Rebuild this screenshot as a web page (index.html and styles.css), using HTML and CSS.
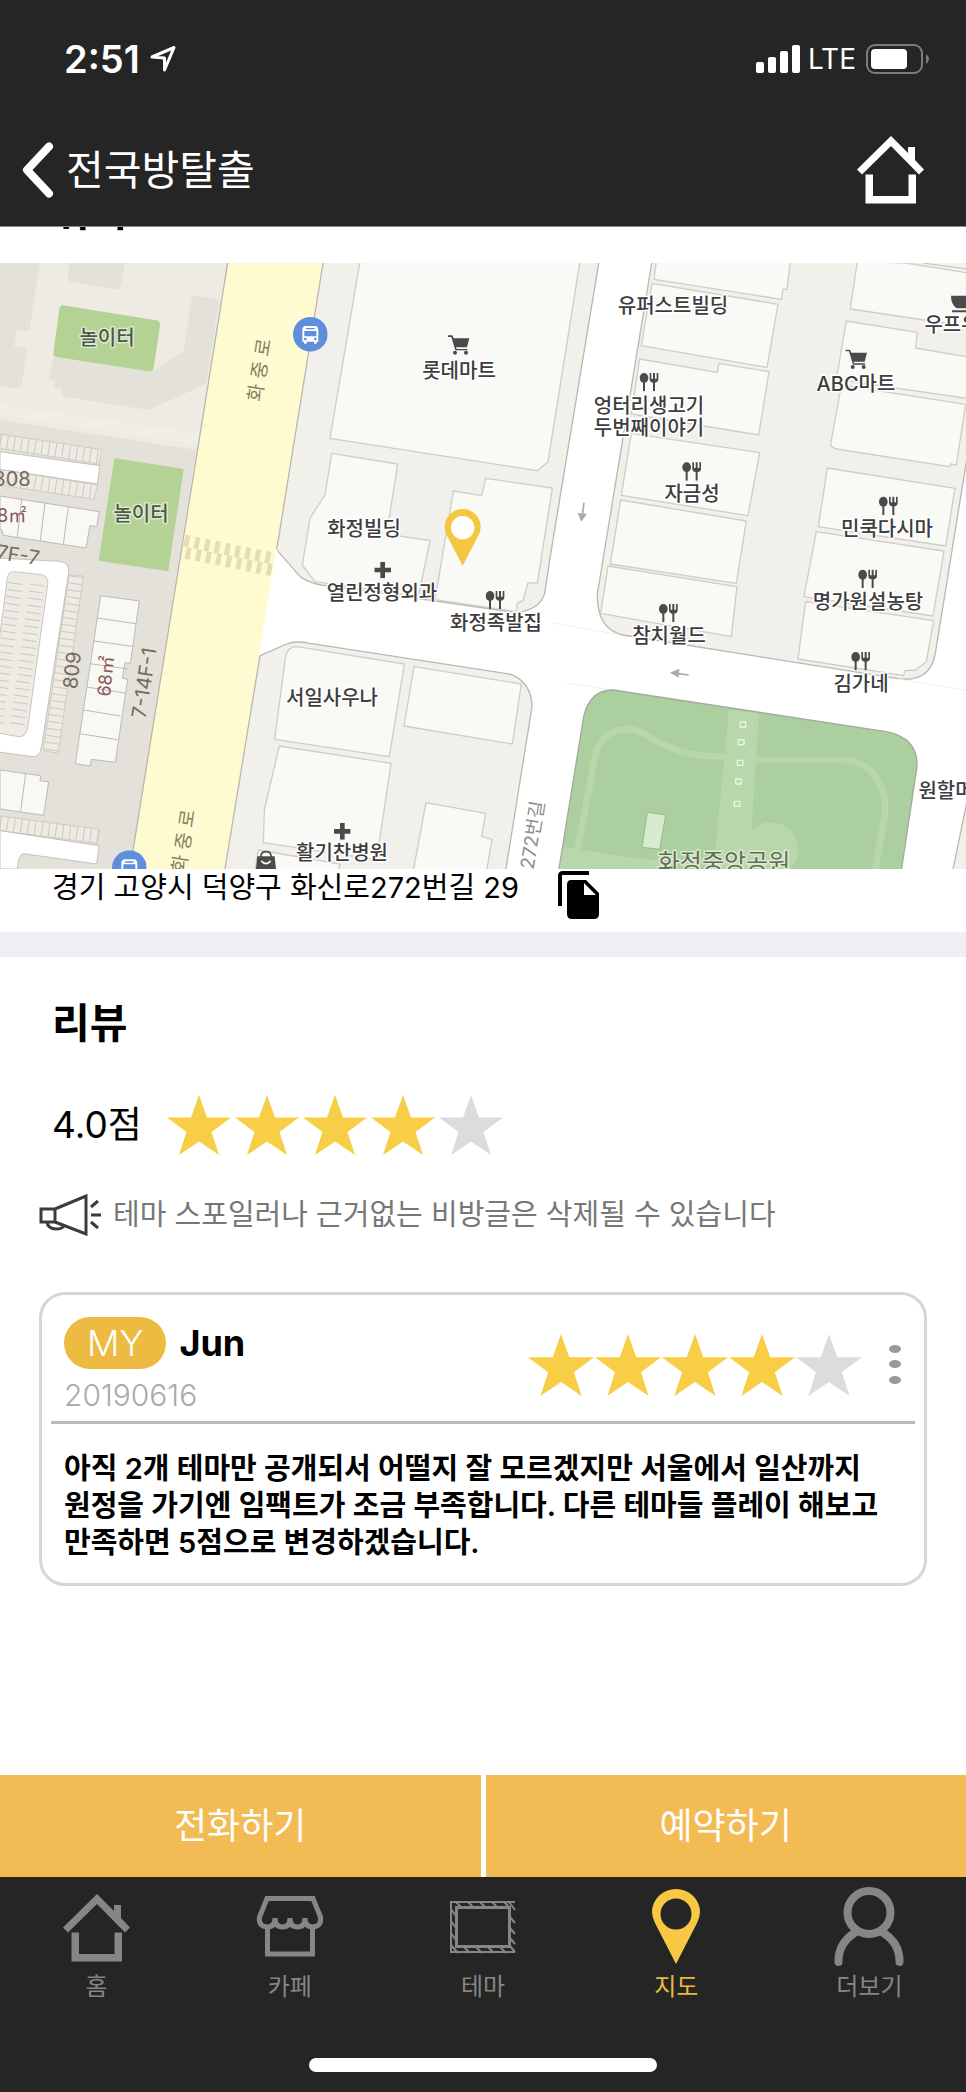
FILE: index.html
```html
<!DOCTYPE html>
<html lang="ko">
<head>
  <meta charset="UTF-8">
  <meta name="viewport" content="width=device-width, initial-scale=1">
  <title>전국방탈출</title>
  <link rel="stylesheet" href="styles.css">
</head>
<body>
  <svg class="simbolos" aria-hidden="true">
    <symbol id="star" viewBox="0 0 64 60"><path d="M32 0L40 22.500H64L44.500 37L52 60L32 46.500L12 60L19.500 37L0 22.500H24Z"/></symbol>
    <symbol id="home" viewBox="0 0 68 68">
      <path d="M34 0L51 17V11H58V24L67 33.500L62 38.500L34 10L5 38.500L0 33.500Z"/>
      <path d="M8.500 38.500H16V60H51.500V38.500H59V67.500H8.500Z"/>
    </symbol>
    <symbol id="food" viewBox="0 0 60 56">
      <ellipse cx="14" cy="16" rx="13" ry="15"/>
      <path d="M11 28H17V56H11ZM31 1H36V18H41V1H47V18H52V1H57V20Q57 29 47 30V56H41V30Q31 29 31 20Z"/>
    </symbol>
    <symbol id="cart" viewBox="0 0 66 60">
      <path d="M0 1H14L18 10H65L58 37H25L27 42H59V46H23L11 6H0Z"/>
      <circle cx="22" cy="53" r="6"/><circle cx="55" cy="53" r="6"/>
    </symbol>
    <symbol id="plus" viewBox="0 0 50 50"><path d="M18 0H32V18H50V32H32V50H18V32H0V18H18Z"/></symbol>
    <symbol id="bus" viewBox="0 0 104 104">
      <circle cx="52" cy="52" r="52" fill="#5f8fdc"/>
      <path fill="#fff" d="M38 27H66Q75 28 76 38V74H71V80H63V74H41V80H33V74H28V38Q29 28 38 27Z"/>
      <path fill="#5f8fdc" d="M39 33H65V37H39ZM34 42H70V58H34Z"/>
      <circle cx="37" cy="66" r="4" fill="#5f8fdc"/><circle cx="67" cy="66" r="4" fill="#5f8fdc"/>
    </symbol>
  </svg>

  <div class="app">
    <div class="status">
      <span class="clock">2:51</span>
      <svg class="arrow" viewBox="0 0 26 28" aria-hidden="true"><path d="M2 12L24 2.500L14.500 25V13Z"/></svg>
      <svg class="signal" viewBox="0 0 45 28" aria-hidden="true">
        <rect x="0" y="17" width="8" height="11" rx="2"/><rect x="12" y="12" width="8" height="16" rx="2"/>
        <rect x="24" y="6" width="8" height="22" rx="2"/><rect x="36" y="0" width="8" height="28" rx="2"/>
      </svg>
      <span class="network">LTE</span>
      <svg class="battery" viewBox="0 0 64 30" aria-hidden="true">
        <rect x="1" y="1" width="55" height="28" rx="8" fill="none" stroke="#7c7c7c" stroke-width="2"/>
        <rect x="5" y="5" width="36" height="20" rx="4" fill="#fff"/>
        <path d="M60 10Q66 15 60 20Z" fill="#7c7c7c"/>
      </svg>
    </div>

    <header class="header">
      <button class="back" type="button">
        <svg viewBox="0 0 32 56" aria-hidden="true"><path d="M27 4.500L5 28L27 51.500"/></svg>
        <span>전국방탈출</span>
      </button>
      <a class="go-home" href="#" aria-label="홈"><svg viewBox="0 0 68 68"><use href="#home"/></svg></a>
    </header>

    <main class="content">
      <section class="location">
        <h2 class="location-title">위치</h2>

        <svg class="map" viewBox="0 0 966 606" role="img" aria-label="지도">
          <rect width="966" height="606" fill="#fff"/>
          <g transform="scale(.33333)" stroke-linejoin="round">
            <!-- 아파트 단지 -->
            <path fill="#edebe4" d="M0 0H683L390 1818H0Z"/>
            <g fill="#e3e1da">
              <path d="M0 0H120L88 203H50L42 250L82 255L65 365Q55 380 30 375L0 368Z"/>
              <path d="M207 0H375L364 65Q360 80 340 78L218 58Q201 55 203 40Z"/>
              <path d="M160 281L145 349L163 353L160 371L187 378L185 399L445 441L618 363L657 115L640 106L590 99Q576 98 574 112L550 266L455 326Z"/>
              <path d="M0 471L588 560L390 1818H0Z"/>
            </g>
            <path fill="#efefe8" d="M0 425L604 512L596 545L0 455Z"/>
            <path fill="#b4d294" d="M188 127L468 172Q482 175 480 188L461 314Q458 327 445 325L168 282Q159 280 160 272L178 138Q180 127 188 127ZM343 585L551 618L505 925L296 893Z"/>
            <g fill="#edebe4" stroke="#cfccc5" stroke-width="3">
              <path d="M0 513L306 560L297 603L0 556ZM0 619L292 666L282 709L0 666Z"/>
              <path d="M207 936L250 939L175 1471L130 1463ZM0 1659L298 1699L292 1741L0 1703Z"/>
            </g>
            <g fill="#fff" stroke="#c4c1bb" stroke-width="3">
              <path d="M0 566L300 608L292 663L0 619ZM0 1703L297 1748L290 1803L70 1772Q55 1775 52 1818H0Z"/>
              <path d="M-5 885L180 895Q210 900 206 930L124 1455Q118 1487 90 1480L-5 1467Z"/>
            </g>
            <path fill="#edebe4" stroke="#c9c6c0" stroke-width="3" d="M40 926L125 935Q147 940 143 965L83 1395Q77 1427 50 1420L-5 1410V1150L22 945Q25 926 40 926Z"/>
            <g fill="none" stroke="#cbc8c1" stroke-dasharray="3 18">
              <path d="M0 535L302 582M0 643L287 688M228 940L153 1466M0 1681L295 1721" stroke-width="42"/>
              <path d="M112 965L50 1400M47 960L-15 1395" stroke-width="44"/>
            </g>
            <g fill="#f8f8f5" stroke="#bdbab5" stroke-width="3">
              <path d="M0 699L298 746L290 791L270 788L258 855L10 817L5 800H0ZM65 709L52 822M135 720L121 833M205 731L190 844"/>
              <path d="M302 998L418 1014L391 1201L375 1199L367 1246L383 1249L346 1498L274 1489L271 1509L226 1502ZM291 1065L408 1082M281 1134L398 1150M270 1202L385 1218M260 1272L375 1290M250 1341L362 1359M239 1412L352 1430"/>
              <path d="M0 1521L122 1538L120 1553L146 1557L131 1657L0 1638ZM77 1531L62 1645"/>
            </g>

            <!-- 화중로 -->
            <path fill="#fffbd1" d="M683 0H970L830 856L820 931L780 1176L675 1818H390Z"/>
            <path fill="none" stroke="#bab7aa" stroke-width="4" d="M683 0L390 1818"/>
            <g fill="none" stroke="#e4dfb2" stroke-width="36" stroke-dasharray="15 16">
              <path d="M553 833L818 886"/><path d="M557 870L820 922"/>
            </g>

            <!-- 블록 -->
            <g fill="#f2f0eb" stroke="#bbb8b2" stroke-width="4">
              <path d="M970 -5L830 860L895 935Q925 965 1000 970L1549 1049Q1620 1040 1634 991L1649 891L1797 -5Z"/>
              <path d="M780 1178L860 1143Q885 1132 930 1141L1534 1234Q1595 1260 1596 1331L1517 1823H674Z"/>
              <path d="M1956 -5L1799 951L1792 991Q1790 1100 1869 1116L2694 1247Q2790 1260 2806 1171L2900 591V-5Z"/>
              <path d="M2900 1620L2858 1823H2900Z"/>
            </g>
            <path fill="none" stroke="#fff" stroke-width="6" d="M830 860L820 931L780 1176"/>
            <g fill="#f9f9f5" stroke="#d0cdc7" stroke-width="4">
              <path d="M1080 -5L990 526L1612 623L1644 596L1740 -5Z"/>
              <path d="M995 571L1193 603L1160 813L1290 833L1255 1001L945 956L907 906L930 766L975 696Z"/>
              <path d="M1360 684L1445 698L1457 646L1657 675L1612 961L1584 959L1569 1013L1552 1021L1549 1046L1305 1010Z"/>
              <path d="M890 1151L1213 1203L1168 1481L824 1429L856 1185Q862 1149 890 1151Z"/>
              <path d="M1242 1211L1564 1263L1537 1443L1212 1389Z"/>
              <path d="M838 1449L1173 1501L1130 1790L790 1739L793 1641Z"/>
              <path d="M1278 1619L1457 1651L1445 1720L1476 1729L1460 1823H1240Z"/>
              <path d="M775 1761L1020 1803L1015 1823H765Z"/>
              <path d="M1969 -5L1962 49L2344 109L2349 79H2361L2371 -5Z"/>
              <path d="M1956 61L2334 124L2301 313L1924 248Z"/>
              <path d="M1919 288L2152 328L2157 301L2307 326L2276 516L1894 453Z"/>
              <path d="M1894 511L2279 569L2244 758L1864 697Z"/>
              <path d="M1862 711L2239 774L2209 961L1831 903Z"/>
              <path d="M1824 909L2211 971L2194 1121L1802 1051Z"/>
              <path d="M2572 -5L2551 138L2900 190V29L2719 0Z"/>
              <path d="M2539 174L2752 208L2746 255L2900 281V406L2509 349Z"/>
              <path d="M2524 366L2897 424L2869 606L2852 603L2849 611L2509 558L2491 548L2514 423Z"/>
              <path d="M2482 615L2865 676L2837 849L2455 791Z"/>
              <path d="M2449 806L2832 864L2799 1059L2412 1001Z"/>
              <path d="M2417 1016L2801 1073L2779 1196L2746 1221L2714 1223L2711 1238L2394 1188Z"/>
            </g>
            <path fill="none" stroke="#c4c1bb" stroke-width="3" d="M2770 0L2900 18"/>
            <path fill="none" stroke="#efefef" stroke-width="3" d="M1655 1080L1860 1115M1700 1260L1840 1281M2694 1248L2900 1282"/>

            <!-- 화정중앙공원 -->
            <path fill="#abcf9e" stroke="#a3aba0" stroke-width="4" d="M1839 1281L2659 1406Q2755 1425 2751 1511L2704 1823H1676L1751 1361Q1770 1280 1839 1281Z"/>
            <path fill="#b8d8ac" d="M2187 1340L2277 1353L2255 1701A82 82 0 0 1 2370 1818H2140ZM1690 1753L1964 1793L1990 1760V1818H1679Z"/>
            <g fill="none" stroke="#b8d8ac" stroke-width="20">
              <path d="M1732 1763L1785 1480C1805 1400 1880 1380 1940 1417S2060 1481 2176 1481"/>
              <path d="M2268 1491H2529C2620 1495 2670 1580 2652 1671L2626 1818"/>
            </g>
            <path fill="#d6ebcf" stroke="#9db695" stroke-width="3" d="M1942 1648L1997 1656L1979 1759L1926 1753Z"/>
            <g fill="none" stroke="#e9f5e4" stroke-width="4">
              <rect x="2220" y="1377" width="17" height="15"/><rect x="2215" y="1430" width="17" height="15"/>
              <rect x="2212" y="1492" width="17" height="15"/><rect x="2207" y="1548" width="17" height="15"/>
              <rect x="2203" y="1615" width="17" height="15"/>
            </g>

            <!-- 일방통행 화살표 -->
            <g fill="#aaa" stroke="#aaa">
              <path d="M1752 719L1748 752" stroke-width="5"/><path d="M1733 750L1761 752L1744 776Z" stroke="none"/>
              <path d="M2066 1236L2035 1232" stroke-width="5"/><path d="M2038 1217L2036 1244L2010 1229Z" stroke="none"/>
            </g>

            <g fill="#4a4a4a">
              <use href="#food" x="1918" y="329" width="60" height="56"/>
              <use href="#food" x="2046" y="597" width="60" height="56"/>
              <use href="#food" x="2636" y="700" width="60" height="56"/>
              <use href="#food" x="2574" y="919" width="60" height="56"/>
              <use href="#food" x="1976" y="1022" width="60" height="56"/>
              <use href="#food" x="2553" y="1166" width="60" height="56"/>
              <use href="#food" x="1456" y="983" width="60" height="56"/>
              <use href="#cart" x="1343" y="216" width="66" height="60"/>
              <use href="#cart" x="2536" y="259" width="66" height="60"/>
              <use href="#plus" x="1123" y="896" width="50" height="50"/>
              <use href="#plus" x="1002" y="1680" width="50" height="50"/>
              <path d="M2853 98H2898V136H2870Q2853 125 2853 98ZM2856 142H2898V148H2856Z"/>
              <path d="M772 1780H824L828 1818H768Z"/>
              <path d="M783 1788V1777Q785 1766 798 1766T813 1777V1788" fill="none" stroke="#4a4a4a" stroke-width="5"/>
              <path d="M784 1793Q798 1811 812 1793" fill="none" stroke="#fff" stroke-width="5"/>
            </g>
            <use href="#bus" x="879" y="162" width="104" height="104"/>
            <use href="#bus" x="336" y="1762" width="104" height="104"/>
            <path fill="#f5c741" d="M1388 908L1341 818Q1334 804 1334 792A54 54 0 0 1 1442 792Q1442 804 1435 818Z"/>
            <circle cx="1388" cy="794" r="35" fill="#fff"/>
          </g>

          <g class="place">
            <text x="459" y="115">롯데마트</text>
            <text x="364" y="273">화정빌딩</text>
            <text x="382" y="337">열린정형외과</text>
            <text x="496" y="367">화정족발집</text>
            <text x="332" y="442">서일사우나</text>
            <text x="342" y="597">활기찬병원</text>
            <text x="673" y="50">유퍼스트빌딩</text>
            <text x="649" y="150">엉터리생고기</text>
            <text x="649" y="172">두번째이야기</text>
            <text x="692" y="238">자금성</text>
            <text x="856" y="128">ABC마트</text>
            <text x="952" y="69">우프우</text>
            <text x="887" y="273">민쿡다시마</text>
            <text x="868" y="346">명가원설농탕</text>
            <text x="669" y="380">참치월드</text>
            <text x="861" y="428">김가네</text>
            <text x="946" y="535">원할머</text>
          </g>
          <g class="place green">
            <text x="107" y="82">놀이터</text>
            <text x="141" y="258">놀이터</text>
            <text class="park" x="724" y="608">화정중앙공원</text>
          </g>
          <g class="road">
            <text transform="translate(266 108) rotate(-81)">화 중 로</text>
            <text transform="translate(190 579) rotate(-81)">화 중 로</text>
            <text class="street" transform="translate(539 573) rotate(-81)">272번길</text>
          </g>
          <g class="block">
            <text x="12" y="223">808</text>
            <text transform="translate(79 408) rotate(-84)">809</text>
            <text class="area" x="6" y="259">68㎡</text>
            <text class="area" transform="translate(112 414) rotate(-84)">68㎡</text>
            <text transform="translate(17 299) rotate(9)">7F-7</text>
            <text transform="translate(151 421) rotate(-81)">7-14F-1</text>
          </g>
        </svg>

        <div class="address">
          <span>경기 고양시 덕양구 화신로272번길 29</span>
          <button class="copy" type="button" aria-label="주소 복사">
            <svg viewBox="0 0 42 48"><path d="M0 35V5Q0 0 5 0H31V4H4V35ZM13 9H28L41 22V43Q41 48 36 48H14Q9 48 9 43V14Q9 9 13 9ZM26 12V24H38Z" fill-rule="evenodd"/></svg>
          </button>
        </div>
      </section>

      <section class="reviews">
        <h2>리뷰</h2>
        <div class="score">
          <span>4.0점</span>
          <div class="stars" role="img" aria-label="5점 만점에 4점">
            <svg><use href="#star"/></svg>
            <svg><use href="#star"/></svg>
            <svg><use href="#star"/></svg>
            <svg><use href="#star"/></svg>
            <svg class="off"><use href="#star"/></svg>
          </div>
        </div>
        <p class="notice">
          <svg viewBox="0 0 64 42" aria-hidden="true">
            <path d="M2 15H16V28H2ZM16 15L47 2V40L16 28M8 28Q9 35 17 35Q23 35 25 32M52 13L59 7M52 21H62M52 28L59 34"/>
          </svg>
          <span>테마 스포일러나 근거없는 비방글은 삭제될 수 있습니다</span>
        </p>

        <article class="card">
          <div class="card-head">
            <div class="user">
              <div class="name"><span class="badge">MY</span><strong>Jun</strong></div>
              <time datetime="2019-06-16">20190616</time>
            </div>
            <div class="stars" role="img" aria-label="5점 만점에 4점">
              <svg><use href="#star"/></svg>
              <svg><use href="#star"/></svg>
              <svg><use href="#star"/></svg>
              <svg><use href="#star"/></svg>
              <svg class="off"><use href="#star"/></svg>
            </div>
            <button class="more" type="button" aria-label="메뉴">
              <svg viewBox="0 0 14 40"><ellipse cx="7" cy="4" rx="6" ry="4"/><ellipse cx="7" cy="19" rx="6" ry="4"/><ellipse cx="7" cy="35" rx="6" ry="4"/></svg>
            </button>
          </div>
          <p class="card-text">아직 2개 테마만 공개되서 어떨지 잘 모르겠지만 서울에서 일산까지 원정을 가기엔 임팩트가 조금 부족합니다. 다른 테마들 플레이 해보고 만족하면 5점으로 변경하겠습니다.</p>
        </article>
      </section>
    </main>

    <div class="actions">
      <button type="button">전화하기</button>
      <button type="button">예약하기</button>
    </div>

    <nav class="tabs">
      <a href="#"><svg viewBox="0 0 70 80"><use href="#home" x="1" y="7" width="68" height="68"/></svg>홈</a>
      <a href="#">
        <svg viewBox="0 0 70 80" class="line">
          <path d="M12 11.500H58L65.500 30Q67 39 58 40Q50 40 50 31Q50 40 42.500 40T35 31Q35 40 27.500 40T20 31Q20 40 12 40Q3 39 4.500 30Z"/>
          <path d="M12.500 40V67H57.500V40"/>
        </svg>카페
      </a>
      <a href="#">
        <svg viewBox="0 0 70 80">
          <path d="M2 14H67V16H4V64H67V66H2ZM7 19H63V61H7ZM10 22V58H60V22Z" fill-rule="evenodd"/>
          <path class="hatch" d="M8 15L14 21M20 15L26 21M32 15L38 21M44 15L50 21M56 15L62 21M61 15L67 23M3 22L8 29M3 34L8 41M3 46L8 53M3 58L10 66M16 60L22 66M28 60L34 66M40 60L46 66M52 60L58 66M62 59L67 65M62 30L67 36M62 41L67 47M62 51L67 57"/>
        </svg>테마
      </a>
      <a href="#" class="active">
        <svg viewBox="0 0 70 80"><path fill-rule="evenodd" d="M35 77L14 36Q11 30 11 25A24 23 0 0 1 59 25Q59 30 56 36ZM35 11.500A15.500 15.500 0 1 0 35 42.500A15.500 15.500 0 1 0 35 11.500Z"/></svg>지도
      </a>
      <a href="#">
        <svg viewBox="0 0 70 80" class="line person"><circle cx="35" cy="25.500" r="21.500"/><path d="M4.500 75Q4 56 22 45M65.500 75Q66 56 48 45"/></svg>더보기
      </a>
    </nav>
    <div class="home-bar"><span></span></div>
  </div>
</body>
</html>
```
FILE: styles.css
```css
* {
  box-sizing: border-box;
}

body {
  margin: 0;
  background: #fff;
  color: #000;
  font-family: Inter, "Noto Sans CJK KR", sans-serif;
}

h2, p {
  margin: 0;
}

button {
  padding: 0;
  border: 0;
  background: none;
  color: inherit;
  font: inherit;
  cursor: pointer;
}

a {
  color: inherit;
  text-decoration: none;
}

svg {
  display: block;
  flex: none;
}

.simbolos {
  position: absolute;
  width: 0;
  height: 0;
}

.app {
  display: flex;
  flex-direction: column;
  min-height: 100vh;
}

/* barra de estado */
.status {
  display: flex;
  align-items: center;
  height: 118px;
  padding: 0 36px 0 64px;
  background: #252525;
  color: #fff;
}

.clock {
  font-size: 38px;
  font-weight: 600;
}

.arrow {
  width: 26px;
  height: 28px;
  margin-left: 10px;
  margin-right: auto;
  fill: none;
  stroke: #fff;
  stroke-width: 3;
  stroke-linejoin: round;
}

.signal {
  width: 45px;
  height: 28px;
  fill: #fff;
}

.network {
  margin: 0 10px 0 7px;
  font-size: 28px;
}

.battery {
  width: 64px;
  height: 30px;
}

/* cabecera */
.header {
  display: flex;
  align-items: center;
  justify-content: space-between;
  height: 109px;
  padding: 0 41px 4px 22px;
  border-bottom: 1px solid #888;
  background: #252525;
  color: #fff;
}

.back {
  display: flex;
  align-items: center;
  gap: 12px;
  font-size: 41px;
  line-height: 56px;
}

.back svg {
  width: 32px;
  height: 56px;
  fill: none;
  stroke: #fff;
  stroke-width: 8;
  stroke-linecap: round;
  stroke-linejoin: round;
}

.go-home svg {
  width: 68px;
  height: 68px;
  fill: #fff;
}

.content {
  flex: 1;
  overflow: hidden;
}

h2 {
  font-size: 41px;
  line-height: 50px;
}

.location {
  border-bottom: 25px solid #efeef3;
}

/* el titulo queda desplazado debajo de la cabecera */
.location-title {
  margin-top: -41px;
  padding: 0 52px 27px;
}

.map {
  width: 100%;
  height: auto;
}

.place {
  fill: #3d3d3d;
  stroke: #fff;
  stroke-width: 3px;
  stroke-linejoin: round;
  paint-order: stroke;
  font-size: 20px;
  font-weight: 500;
  text-anchor: middle;
}

.green {
  fill: #4c5a48;
  stroke: #dcebd0;
}

.park {
  fill: #5f6e5a;
  font-size: 24px;
  font-weight: 400;
}

.road {
  fill: #857f5c;
  font-size: 19px;
  text-anchor: middle;
}

.street {
  fill: #8e8e8e;
}

.block {
  fill: #75695f;
  font-size: 20px;
  text-anchor: middle;
}

.area {
  fill: #8c5656;
  font-size: 18px;
}

.address {
  display: flex;
  gap: 39px;
  height: 63px;
  padding: 0 52px;
  font-size: 29px;
  line-height: 38px;
}

.copy {
  align-self: flex-start;
  padding-top: 2px;
}

.copy svg {
  width: 42px;
  height: 48px;
}

/* opiniones */
.reviews {
  padding: 41px 39px 40px;
}

.reviews h2 {
  padding-left: 13px;
}

.score {
  display: flex;
  align-items: center;
  gap: 25px;
  margin-top: 47px;
  padding-left: 13px;
  font-size: 37px;
  line-height: 60px;
}

.stars {
  display: flex;
  gap: 4px;
  fill: #f7ce46;
}

.stars svg {
  width: 64px;
  height: 60px;
}

.stars .off {
  fill: #dcdcdc;
}

.notice {
  display: flex;
  align-items: center;
  gap: 10px;
  margin-top: 39px;
  color: #777;
  font-size: 29px;
  line-height: 42px;
}

.notice svg {
  width: 64px;
  height: 42px;
  fill: none;
  stroke: #3c3c3c;
  stroke-width: 3;
}

.card {
  margin-top: 56px;
  padding: 22px 9px 22px;
  border: 3px solid #d6d6d6;
  border-radius: 26px;
}

.card-head {
  display: flex;
  align-items: center;
  padding: 0 13px 8px 13px;
  border-bottom: 3px solid #b9b9b9;
}

.user {
  margin-right: auto;
}

.name {
  display: flex;
  align-items: center;
  gap: 13px;
  font-size: 36px;
}

.badge {
  padding: 0 23px;
  border-radius: 26px;
  background: #edbb42;
  color: #fff;
  font-weight: 300;
  line-height: 52px;
}

time {
  display: block;
  padding-top: 8px;
  color: #aaa;
  font-size: 30px;
  font-weight: 300;
  line-height: 36px;
}

.card .stars {
  gap: 1px;
}

.card .stars svg {
  width: 66px;
  height: 64px;
}

.more {
  margin-left: 26px;
}

.more svg {
  width: 14px;
  height: 40px;
  fill: #999;
}

.card-text {
  padding: 26px 13px 0;
  font-size: 29px;
  font-weight: 600;
  line-height: 37px;
  word-break: keep-all;
}

/* botones y menu inferior */
.actions {
  display: flex;
  gap: 5px;
}

.actions button {
  flex: 1;
  background: #f3bb54;
  color: #fff;
  font-size: 36px;
  line-height: 102px;
}

.tabs {
  display: flex;
  padding-top: 8px;
  background: #252525;
  color: #868686;
  font-size: 24px;
  line-height: 36px;
}

.tabs a {
  flex: 1;
  display: flex;
  flex-direction: column;
  align-items: center;
}

.tabs svg {
  width: 70px;
  height: 84px;
  fill: #868686;
}

.tabs .line {
  fill: none;
  stroke: #868686;
  stroke-width: 5;
}

.tabs .person {
  stroke-width: 8;
  stroke-linecap: round;
}

.hatch {
  stroke: #868686;
  stroke-width: 2;
}

.tabs .active {
  color: #e9b93c;
}

.active svg {
  fill: #f6c843;
}

.home-bar {
  display: flex;
  justify-content: center;
  padding: 53px 0 20px;
  background: #252525;
}

.home-bar span {
  width: 36%;
  height: 14px;
  border-radius: 7px;
  background: #fff;
}
```
